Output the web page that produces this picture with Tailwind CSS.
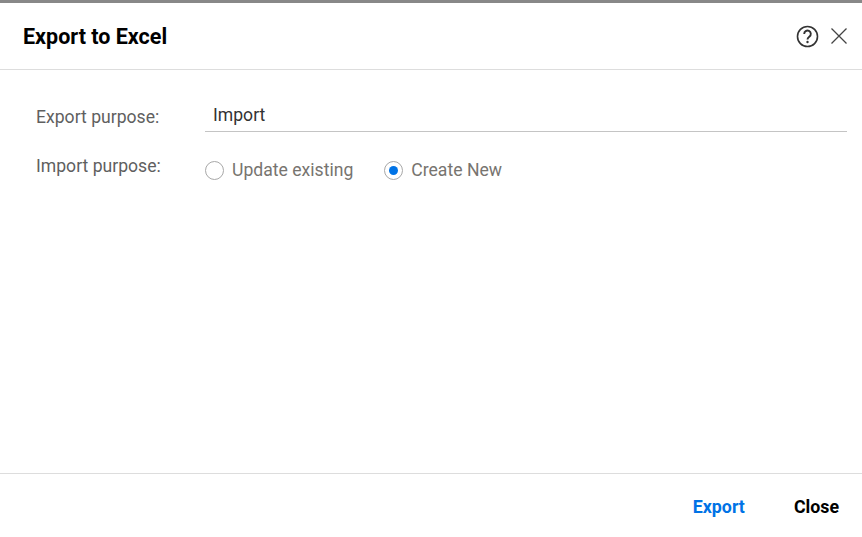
<!DOCTYPE html>
<html><head><meta charset="utf-8"><script src="https://cdn.jsdelivr.net/npm/@tailwindcss/browser@4"></script></head>
<body class="bg-white">
<div class="w-[862px] h-[537px] flex flex-col overflow-hidden bg-white border-t-[3px] border-[#888888] font-['Roboto',sans-serif]">
  <header class="h-[67px] shrink-0 flex items-center justify-between pl-[23px] pr-[14px] border-b border-[#dddddd]">
    <h1 class="text-[21.5px] font-bold text-black leading-none pt-[2px]">Export to Excel</h1>
    <div class="flex items-center gap-[11px]">
      <svg width="23" height="23" viewBox="0 0 23 23" fill="none" stroke="#333" stroke-width="1.6"><circle cx="11.5" cy="11.5" r="10"/><path d="M8.2 9a3.3 3.3 0 1 1 5.2 2.6c-1.1.8-1.9 1.3-1.9 2.8" stroke-width="1.9"/><circle cx="11.5" cy="17" r="1.2" fill="#333" stroke="none"/></svg>
      <svg width="18" height="18" viewBox="0 0 18 18" fill="none" stroke="#444" stroke-width="1.3"><path d="M1.5 1.5l15 15M16.5 1.5l-15 15"/></svg>
    </div>
  </header>
  <main class="flex-1 pl-[36px] pr-[15px] pt-[29px] text-[17.6px] leading-[24px]">
    <div class="flex items-start">
      <div class="w-[169px] text-[#5f5f5f] pt-[6px]">Export purpose:</div>
      <div class="flex-1 h-[33px] border-b border-[#c4c4c4] pl-[8px] pt-[4px] text-[#333333]">Import</div>
    </div>
    <div class="flex items-start mt-[11px]">
      <div class="w-[169px] text-[#5f5f5f] pt-[11px]">Import purpose:</div>
      <div class="flex items-center gap-[31px] pt-[15px] text-[#77746f]">
        <label class="flex items-center gap-[8px]"><span class="size-[19px] rounded-full border border-[#a8a8a8] bg-white"></span>Update existing</label>
        <label class="flex items-center gap-[8px]"><span class="size-[19px] rounded-full border border-[#a8a8a8] bg-white flex items-center justify-center"><span class="size-[9px] rounded-full bg-[#0073e6]"></span></span>Create New</label>
      </div>
    </div>
  </main>
  <footer class="h-[64px] shrink-0 border-t border-[#dddddd] flex items-center justify-end gap-[49px] pr-[23px] text-[17.8px] font-bold pt-[3px]">
    <button class="text-[#0073e6]">Export</button>
    <button class="text-black">Close</button>
  </footer>
</div>
</body></html>
